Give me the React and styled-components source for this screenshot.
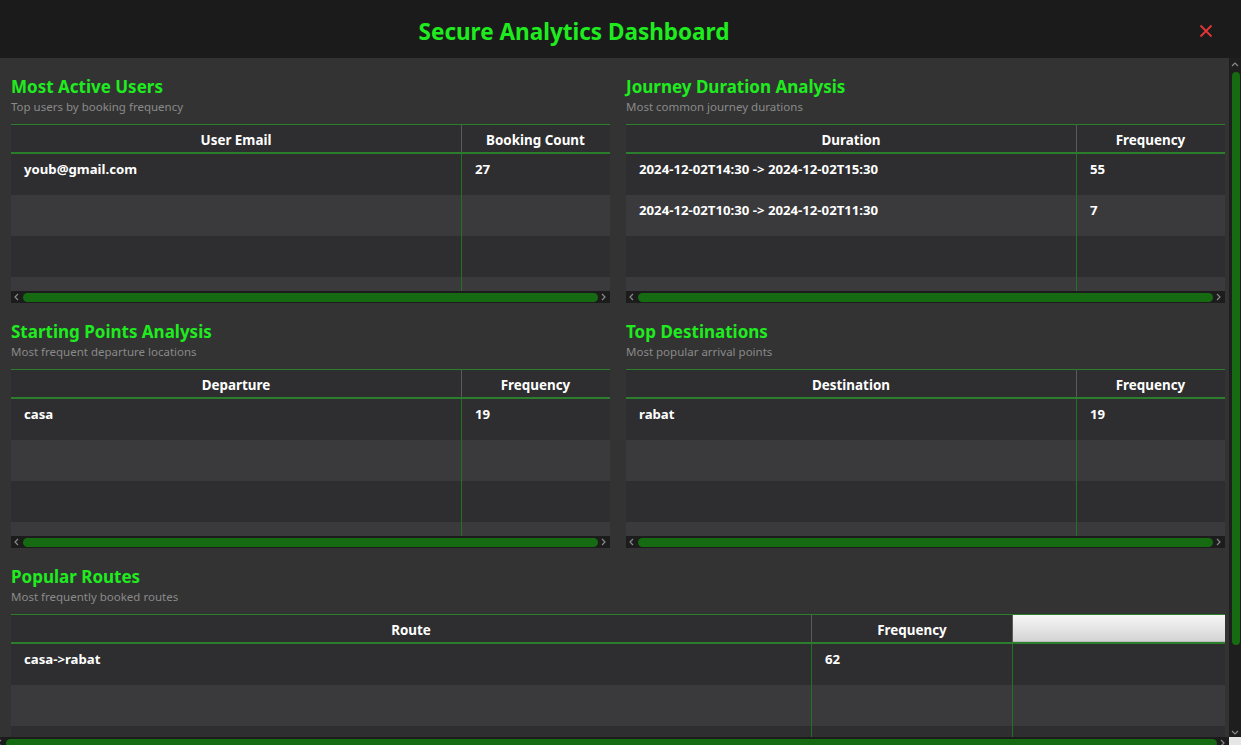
import React from 'react';
import styled, { createGlobalStyle } from 'styled-components';

const GREEN = '#1eec1e';
const LINE_GREEN = '#2c7d2c';
const COL_GREEN = '#217321';
const THUMB = '#156a12';

const Global = createGlobalStyle`
  html, body { margin: 0; padding: 0; height: 100%; overflow: hidden; background: #333333; }
  body { font-family: "Noto Sans", "Open Sans", sans-serif; }
  #root { height: 100%; }
`;

const Window = styled.div`
  width: 1241px;
  height: 745px;
  display: flex;
  flex-direction: column;
  overflow: hidden;
  background: #333333;
`;

const Header = styled.header`
  height: 58px;
  flex: none;
  background: #1b1b1b;
  display: flex;
  align-items: center;
`;

const AppTitle = styled.h1`
  flex: 1;
  margin: 6px 0 0;
  padding-right: 51px;
  text-align: center;
  font-size: 22.5px;
  line-height: 28px;
  font-weight: 700;
  color: ${GREEN};
`;

const CloseButton = styled.button`
  flex: none;
  margin: 4px 28px 0 0;
  padding: 0;
  width: 14px;
  height: 14px;
  border: none;
  background: none;
  display: flex;
  cursor: pointer;
`;

const Body = styled.div`
  flex: none;
  display: grid;
  grid-template-columns: 1fr 12px;
  grid-template-rows: 679px 12px;
`;

const Content = styled.main`
  overflow: hidden;
  padding: 17px 4px 0 11px;
  display: flex;
  flex-direction: column;
  gap: 17px;
`;

const PairGrid = styled.div`
  display: grid;
  grid-template-columns: 599px 599px;
  column-gap: 16px;
  row-gap: 17px;
`;

const Section = styled.section`
  display: flex;
  flex-direction: column;
  min-width: 0;
`;

const SectionTitle = styled.h2`
  margin: 0;
  font-size: 17px;
  line-height: 24px;
  font-weight: 700;
  color: ${GREEN};
`;

const SectionSub = styled.p`
  margin: 0 0 9px;
  font-size: 11.5px;
  line-height: 16px;
  color: #8a8a8a;
`;

const Table = styled.div`
  border-top: 1px solid ${LINE_GREEN};
  background: #2e2e30;
  overflow: hidden;
`;

const HeaderRow = styled.div`
  display: grid;
  grid-template-columns: ${p => p.$cols};
  height: 27px;
  border-bottom: 2px solid ${LINE_GREEN};
  background: #2e2e30;
`;

const HeaderCell = styled.div`
  display: flex;
  align-items: center;
  justify-content: center;
  padding-top: 3px;
  font-size: 13.4px;
  font-weight: 700;
  color: #ffffff;
  border-right: 1px solid ${p => (p.$last ? 'transparent' : '#5a5a5a')};
  white-space: nowrap;
  ${p =>
    p.$filler &&
    `background: linear-gradient(#f6f6f6, #d4d4d4); border-right: none; border-bottom: 1px solid #bdbdbd;`}
`;

const Viewport = styled.div`
  height: ${p => p.$height}px;
  overflow: hidden;
`;

const Row = styled.div`
  display: grid;
  grid-template-columns: ${p => p.$cols};
  height: 41px;
  background: ${p => (p.$alt ? '#3a3a3c' : '#2e2e30')};
`;

const Cell = styled.div`
  padding: 7px 12px 0 13px;
  font-size: 13.2px;
  line-height: 17px;
  font-weight: 700;
  color: #ffffff;
  white-space: nowrap;
  overflow: hidden;
  border-right: 1px solid ${p => (p.$last ? 'transparent' : COL_GREEN)};
`;

const HBar = styled.div`
  height: 12px;
  background: #1c1c1c;
  display: flex;
  align-items: center;
  padding: 0 2px;
  gap: 2px;
`;

const HThumb = styled.div`
  flex: 1;
  height: 9px;
  border-radius: 5px;
  background: ${THUMB};
`;

const ArrowBox = styled.span`
  width: 8px;
  height: 10px;
  display: flex;
  align-items: center;
  justify-content: center;
  flex: none;
`;

const VBar = styled.div`
  grid-row: 1;
  grid-column: 2;
  background: #1e1e1e;
  display: flex;
  flex-direction: column;
  align-items: center;
  padding-top: 3px;
`;

const VThumb = styled.div`
  width: 8px;
  height: 573px;
  margin: 3px 0 0 2px;
  border-radius: 4px;
  background: ${THUMB};
`;

const VSpacer = styled.div`
  flex: 1;
`;

const PageHBar = styled(HBar)`
  grid-row: 2;
  grid-column: 1;
  padding: 0 2px 0 0;
  margin-left: -4px;
`;

const Corner = styled.div`
  grid-row: 2;
  grid-column: 2;
  background: #e6e6e6;
`;

const Chevron = ({ dir }) => {
  const pts = {
    left: '5,1 2,4 5,7',
    right: '2,1 5,4 2,7',
    up: '1,5 4,2 7,5',
    down: '1,2 4,5 7,2',
  }[dir];
  return (
    <svg width="8" height="8" viewBox="0 0 8 8">
      <polyline points={pts} fill="none" stroke="#8a8a8a" strokeWidth="1.2" />
    </svg>
  );
};

const TableScrollbar = () => (
  <HBar>
    <ArrowBox><Chevron dir="left" /></ArrowBox>
    <HThumb />
    <ArrowBox><Chevron dir="right" /></ArrowBox>
  </HBar>
);

const DataTable = ({ cols, headers, rows, rowCount, viewport, filler, scrollbar = true }) => {
  const allRows = Array.from({ length: rowCount }, (_, i) => rows[i] || []);
  const nCols = headers.length + (filler ? 1 : 0);
  return (
    <Table>
      <HeaderRow $cols={cols}>
        {headers.map((h, i) => (
          <HeaderCell key={h} $last={!filler && i === headers.length - 1}>{h}</HeaderCell>
        ))}
        {filler && <HeaderCell $filler />}
      </HeaderRow>
      <Viewport $height={viewport}>
        {allRows.map((r, i) => (
          <Row key={i} $cols={cols} $alt={i % 2 === 1}>
            {Array.from({ length: nCols }, (_, c) => (
              <Cell key={c} $last={c === nCols - 1}>{r[c] || ''}</Cell>
            ))}
          </Row>
        ))}
      </Viewport>
      {scrollbar && <TableScrollbar />}
    </Table>
  );
};

const Panel = ({ title, sub, children }) => (
  <Section>
    <SectionTitle>{title}</SectionTitle>
    <SectionSub>{sub}</SectionSub>
    {children}
  </Section>
);

const SMALL_COLS = '451px 1fr';

export default function App() {
  return (
    <Window>
      <Global />
      <Header>
        <AppTitle>Secure Analytics Dashboard</AppTitle>
        <CloseButton aria-label="Close">
          <svg width="14" height="14" viewBox="0 0 14 14">
            <path d="M1.5 1.5 L12.5 12.5 M12.5 1.5 L1.5 12.5" stroke="#e53535" strokeWidth="1.8" />
          </svg>
        </CloseButton>
      </Header>
      <Body>
        <Content>
          <PairGrid>
            <Panel title="Most Active Users" sub="Top users by booking frequency">
              <DataTable
                cols={SMALL_COLS}
                headers={['User Email', 'Booking Count']}
                rows={[['youb@gmail.com', '27']]}
                rowCount={4}
                viewport={137}
              />
            </Panel>
            <Panel title="Journey Duration Analysis" sub="Most common journey durations">
              <DataTable
                cols={SMALL_COLS}
                headers={['Duration', 'Frequency']}
                rows={[
                  ['2024-12-02T14:30 -> 2024-12-02T15:30', '55'],
                  ['2024-12-02T10:30 -> 2024-12-02T11:30', '7'],
                ]}
                rowCount={4}
                viewport={137}
              />
            </Panel>
            <Panel title="Starting Points Analysis" sub="Most frequent departure locations">
              <DataTable
                cols={SMALL_COLS}
                headers={['Departure', 'Frequency']}
                rows={[['casa', '19']]}
                rowCount={4}
                viewport={137}
              />
            </Panel>
            <Panel title="Top Destinations" sub="Most popular arrival points">
              <DataTable
                cols={SMALL_COLS}
                headers={['Destination', 'Frequency']}
                rows={[['rabat', '19']]}
                rowCount={4}
                viewport={137}
              />
            </Panel>
          </PairGrid>
          <Panel title="Popular Routes" sub="Most frequently booked routes">
            <DataTable
              cols="801px 201px 1fr"
              headers={['Route', 'Frequency']}
              rows={[['casa->rabat', '62']]}
              rowCount={4}
              viewport={137}
              filler
            />
          </Panel>
        </Content>
        <VBar>
          <Chevron dir="up" />
          <VThumb />
          <VSpacer />
          <Chevron dir="down" />
        </VBar>
        <PageHBar>
          <ArrowBox><Chevron dir="left" /></ArrowBox>
          <HThumb />
          <ArrowBox><Chevron dir="right" /></ArrowBox>
        </PageHBar>
        <Corner />
      </Body>
    </Window>
  );
}
